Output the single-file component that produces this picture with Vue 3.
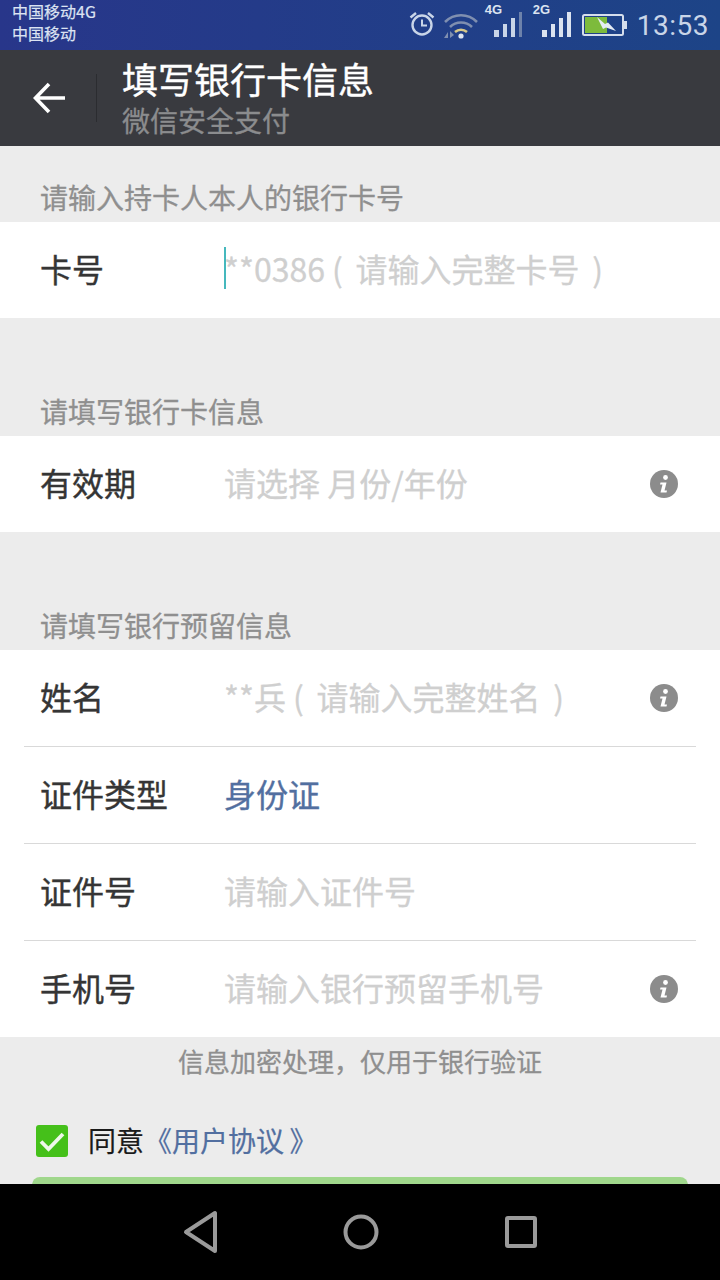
<script setup>
const sections = [
  { label: '请输入持卡人本人的银行卡号', first: true, rows: [
    { name: '卡号', value: '**0386 (\u2004\u200a请输入完整卡号\u2004\u200a)', cursor: true } ] },
  { label: '请填写银行卡信息', rows: [
    { name: '有效期', value: '请选择 月份/年份', info: true } ] },
  { label: '请填写银行预留信息', rows: [
    { name: '姓名', value: '**兵 (\u2004\u200a请输入完整姓名\u2004\u200a)', info: true },
    { name: '证件类型', value: '身份证', link: true },
    { name: '证件号', value: '请输入证件号' },
    { name: '手机号', value: '请输入银行预留手机号', info: true } ] }
]
</script>

<template>
  <div class="screen">
    <header class="status">
      <div class="carrier"><span>中国移动4G</span><span>中国移动</span></div>
      <div class="status-right">
        <svg class="ic-alarm" width="28" height="28" viewBox="0 0 28 28" fill="none" stroke="#c9d5e8">
          <circle cx="14" cy="15" r="9.5" stroke-width="2.4"/>
          <path d="M14 9.5V15.5H19" stroke-width="2"/>
          <path d="M2.5 7.5L8 3M25.5 7.5L20 3" stroke-width="2.4"/>
        </svg>
        <svg class="ic-wifi" width="36" height="28" viewBox="0 0 36 28" fill="none">
          <path d="M2 11C11 2 25 2 34 11" stroke="#7f8fb0" stroke-width="2.6"/>
          <path d="M7 16C13 10 23 10 29 16" stroke="#7f8fb0" stroke-width="2.6"/>
          <path d="M12 21C15.500 18 20.500 18 24 21" stroke="#d8c98a" stroke-width="2.6"/>
          <circle cx="18" cy="25" r="2.600" fill="#dfe5f0"/>
          <path d="M1 27L5 21V27ZM7 20L11 24L7 27Z" fill="#7f8fb0"/>
        </svg>
        <div class="signal">
          <b>4G</b>
          <svg width="30" height="28" viewBox="0 0 30 28" fill="#c9d5e8">
            <rect x="0" y="20" width="5" height="7"/>
            <rect x="9" y="14" width="4" height="13"/>
            <rect x="17" y="8" width="4" height="19"/>
            <rect x="25" y="2" width="3" height="25" fill="#6d82ab"/>
          </svg>
        </div>
        <div class="signal">
          <b>2G</b>
          <svg width="30" height="28" viewBox="0 0 30 28" fill="#dbe3f0">
            <rect x="0" y="20" width="5" height="7"/>
            <rect x="9" y="14" width="4" height="13"/>
            <rect x="17" y="8" width="4" height="19"/>
            <rect x="25" y="2" width="4" height="25"/>
          </svg>
        </div>
        <svg class="ic-batt" width="46" height="24" viewBox="0 0 46 24" fill="none">
          <rect x="1" y="2" width="40" height="20" rx="1.500" stroke="#d5deec" stroke-width="2"/>
          <rect x="3" y="4" width="22" height="16" fill="#7dbb3c"/>
          <rect x="42" y="8" width="3" height="8" fill="#d5deec"/>
          <path d="M15 4L23 11L26 9.500L34 18L24 14.500L21 16Z" fill="#e6edf5"/>
        </svg>
        <span class="time">13:53</span>
      </div>
    </header>

    <div class="toolbar">
      <svg class="back" width="32" height="32" viewBox="0 0 32 32" fill="none" stroke="#fff" stroke-width="3.600">
        <path d="M2 16H32M16 2L2.500 16L16 30"/>
      </svg>
      <i class="divider"></i>
      <div class="titles">
        <span class="title">填写银行卡信息</span>
        <span class="subtitle">微信安全支付</span>
      </div>
    </div>

    <main class="content">
      <section v-for="s in sections" :key="s.label">
        <div class="sec-label" :class="{ first: s.first }"><span>{{ s.label }}</span></div>
        <div class="rows">
          <div v-for="r in s.rows" :key="r.name" class="row">
            <span class="name">{{ r.name }}</span>
            <span class="value" :class="{ link: r.link, cursor: r.cursor }">{{ r.value }}</span>
            <svg v-if="r.info" class="info" width="28" height="28" viewBox="0 0 28 28">
              <circle cx="14" cy="14" r="14" fill="#8c8c8c"/>
              <circle cx="15.500" cy="7.500" r="2.400" fill="#fff"/>
              <path d="M10.500 12.500H16.500L14.500 20.500H17L16.500 22.500H10.500L12.500 14.500H10Z" fill="#fff"/>
            </svg>
          </div>
        </div>
      </section>
      <p class="note">信息加密处理，仅用于银行验证</p>
      <div class="agree">
        <svg class="check" width="32" height="32" viewBox="0 0 32 32">
          <rect width="32" height="32" rx="3" fill="#45c01a"/>
          <path d="M5 16.500L12.500 24L27 9" fill="none" stroke="#eef8ea" stroke-width="3.800"/>
        </svg>
        <span class="agree-text">同意<a>《用户协议&#8201;》</a></span>
      </div>
      <div class="submit"></div>
    </main>

    <nav class="navbar">
      <svg width="36" height="44" viewBox="0 0 36 44" fill="none" stroke="#9a9a9a" stroke-width="4" stroke-linejoin="round">
        <path d="M33 3V41L4 22Z"/>
      </svg>
      <svg width="36" height="36" viewBox="0 0 36 36" fill="none" stroke="#9a9a9a" stroke-width="4">
        <ellipse cx="18" cy="18" rx="15.500" ry="15.500"/>
      </svg>
      <svg width="32" height="32" viewBox="0 0 32 32" fill="none" stroke="#9a9a9a" stroke-width="4">
        <rect x="2" y="2" width="28" height="28" rx="1"/>
      </svg>
    </nav>
  </div>
</template>

<style scoped>
.screen {
  width: 720px;
  height: 1280px;
  display: flex;
  flex-direction: column;
  overflow: hidden;
  background: #ececec;
  font-family: "Noto Sans CJK SC", "Noto Sans", sans-serif;
}
.status {
  height: 50px;
  flex: none;
  display: flex;
  justify-content: space-between;
  align-items: flex-start;
  padding: 0 11px 0 12px;
  background: linear-gradient(90deg, #28368a, #1d4487);
}
.carrier {
  display: flex;
  flex-direction: column;
  font-size: 16px;
  line-height: 22px;
  color: #dce3f2;
  -webkit-text-stroke: 0.2px #dce3f2;
}
.status-right {
  display: flex;
  align-items: center;
  height: 50px;
}
.ic-alarm { margin-right: 8px; margin-bottom: 2px; margin-left: -1px; }
.ic-wifi { margin-right: 15px; margin-left: -1px; }
.signal {
  position: relative;
  width: 30px;
  height: 28px;
  margin-right: 18px;
  margin-bottom: 2px;
}
.signal svg { display: block; }
.signal b {
  position: absolute;
  left: -9px;
  top: -7px;
  font: 700 13px/14px "Liberation Sans", sans-serif;
  color: #dbe3f0;
}
.ic-batt { margin-right: 9px; margin-left: -8px; }
.time {
  font: 400 28px/32px Roboto, sans-serif;
  color: #c9d5e8;
  letter-spacing: 0.500px;
  padding-top: 1px;
}
.toolbar {
  height: 96px;
  flex: none;
  display: flex;
  align-items: center;
  background: #393a3f;
  padding-left: 33px;
}
.back { flex: none; }
.divider {
  width: 1px;
  height: 48px;
  background: #2b2c30;
  margin-left: 31px;
  margin-right: 25px;
}
.titles { display: flex; flex-direction: column; margin-top: -3px; }
.title {
  font-size: 36px;
  line-height: 46px;
  color: #fff;
  -webkit-text-stroke: 0.4px #fff;
}
.subtitle {
  font-size: 28px;
  line-height: 38px;
  color: #8b8c8e;
  -webkit-text-stroke: 0.3px #8b8c8e;
}
.content {
  flex: 1;
  min-height: 0;
  overflow: hidden;
}
.sec-label {
  height: 118px;
  display: flex;
  align-items: flex-end;
  padding-left: 40px;
  font-size: 28px;
  line-height: 50px;
  color: #8f8f8f;
  -webkit-text-stroke: 0.3px #8f8f8f;
}
.sec-label.first { height: 76px; }
.rows { background: #fff; }
.row {
  height: 96px;
  display: flex;
  align-items: center;
  margin: 0 24px;
  padding: 0 18px 0 16px;
  border-bottom: 1px solid #d9d9d9;
  box-sizing: content-box;
}
.row:last-child { border-bottom: 0; }
.name {
  width: 184px;
  flex: none;
  font-size: 32px;
  color: #353535;
  -webkit-text-stroke: 0.4px #353535;
  margin-bottom: 4px;
}
.value {
  flex: 1;
  font-size: 32px;
  color: #cfcfcf;
  -webkit-text-stroke: 0.3px #cfcfcf;
  white-space: pre;
  position: relative;
  margin-bottom: 4px;
}
.value.link {
  color: #526fa0;
  -webkit-text-stroke: 0.4px #526fa0;
}
.value.cursor::before {
  content: "";
  position: absolute;
  left: 0;
  top: 2px;
  bottom: 2px;
  width: 2px;
  background: #45b8bd;
}
.info { flex: none; }
.note {
  margin: 0;
  height: 48px;
  text-align: center;
  font-size: 26px;
  line-height: 48px;
  color: #8f8f8f;
  -webkit-text-stroke: 0.3px #8f8f8f;
}
.agree {
  margin-top: 40px;
  padding-left: 36px;
  display: flex;
  align-items: center;
  height: 32px;
}
.check { flex: none; margin-right: 20px; }
.agree-text {
  font-size: 28px;
  color: #1a1a1a;
  -webkit-text-stroke: 0.2px #1a1a1a;
  margin-bottom: 2px;
}
.agree-text a {
  color: #526fa0;
  -webkit-text-stroke: 0.2px #526fa0;
}
.submit {
  margin: 20px 32px 0;
  height: 90px;
  border-radius: 8px;
  background: #a0d78c;
}
.navbar {
  height: 96px;
  flex: none;
  background: #000;
  display: grid;
  grid-template-columns: 162px 160px 160px;
  justify-content: center;
  justify-items: center;
  align-items: center;
}
</style>
